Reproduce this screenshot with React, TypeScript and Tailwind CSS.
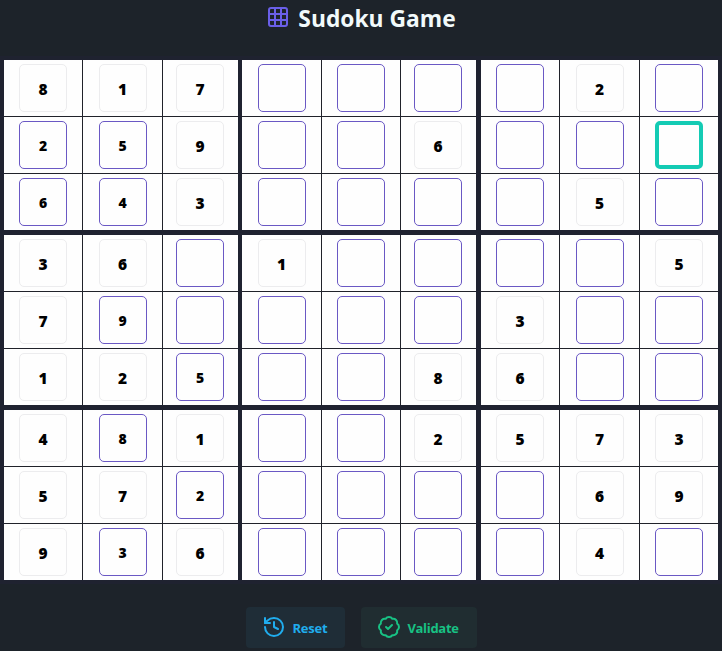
import React from "react";
import { BadgeCheck, Grid3x3, History } from "lucide-react";

type Kind = "given" | "entered" | "empty" | "focused";

// Digits are givens, digits after "+" are player entries, "." is empty, "*" is focused.
const puzzle: string[][] = [
  ["8", "1", "7", ".", ".", ".", ".", "2", "."],
  ["+2", "+5", "9", ".", ".", "6", ".", ".", "*"],
  ["+6", "+4", "3", ".", ".", ".", ".", "5", "."],
  ["3", "6", ".", "1", ".", ".", ".", ".", "5"],
  ["7", "+9", ".", ".", ".", ".", "3", ".", "."],
  ["1", "2", "+5", ".", ".", "8", "6", ".", "."],
  ["4", "+8", "1", ".", ".", "2", "5", "7", "3"],
  ["5", "7", "+2", ".", ".", ".", ".", "6", "9"],
  ["9", "+3", "6", ".", ".", ".", ".", "4", "."],
];

const boxStyles: Record<Kind, string> = {
  given: "border border-[#ececee] text-[15.5px] pt-[3px]",
  entered: "border border-[#6a58c4] text-[14px] pt-px",
  empty: "border border-[#6a58c4]",
  focused: "border-4 border-[#14cbb4]",
};

const bands = [0, 1, 2];
const bandColumns = [
  "grid-cols-[78px_79px_75px]",
  "grid-cols-[79px_78px_75px]",
  "grid-cols-[78px_79px_78px]",
];

function Cell({ code, narrow }: { code: string; narrow: boolean }) {
  const kind: Kind =
    code === "." ? "empty" : code === "*" ? "focused" : code[0] === "+" ? "entered" : "given";
  const digit = code.replace(/[^0-9]/g, "");
  return (
    <div className={`flex items-center justify-center bg-[#fefefe] ${narrow ? "pr-px" : ""}`}>
      <div
        className={`flex size-12 items-center justify-center rounded-[5px] font-extrabold text-black ${boxStyles[kind]}`}
      >
        {digit}
      </div>
    </div>
  );
}

function Block({ row, col }: { row: number; col: number }) {
  return (
    <div className={`grid grid-rows-[56px_56px_56px] gap-px bg-[#20222a] ${bandColumns[col]}`}>
      {bands.map((r) =>
        bands.map((c) => (
          <Cell key={`${r}${c}`} code={puzzle[row * 3 + r][col * 3 + c]} narrow={c === 2 && col < 2} />
        )),
      )}
    </div>
  );
}

export default function App() {
  return (
    <main className="h-[651px] w-[722px] overflow-hidden bg-[#1d232a] font-['Open_Sans','Noto_Sans',sans-serif]">
      <header className="flex h-14 items-start justify-center gap-2">
        <Grid3x3 className="mt-[5px] size-6 text-[#6a5fe8]" strokeWidth={2} />
        <h1 className="pt-[3px] text-[22.8px] leading-8 font-bold whitespace-nowrap text-[#f2fafb]">Sudoku Game</h1>
      </header>
      <section className="flex flex-col gap-[5px] bg-[#1f2230] p-1">
        {bands.map((row) => (
          <div key={row} className="grid grid-cols-[238px_239px_237px]">
            {bands.map((col) => (
              <div key={col} className="flex">
                <Block row={row} col={col} />
              </div>
            ))}
          </div>
        ))}
      </section>
      <footer className="flex justify-center gap-4 pt-[23px]">
        <button className="flex h-[41px] w-[99px] items-center justify-center gap-1.5 rounded bg-[#1f2d37] text-[13px] font-bold tracking-[-0.2px] text-[#20adee]">
          <History className="mb-0.5 size-6 shrink-0" strokeWidth={2} />
          <span className="pt-0.5">Reset</span>
        </button>
        <button className="flex h-[41px] w-[116px] items-center justify-center gap-1.5 rounded bg-[#202d31] pr-px text-[13px] font-bold tracking-[-0.3px] text-[#18c184]">
          <BadgeCheck className="mb-0.5 size-6 shrink-0" strokeWidth={2} />
          <span className="pt-0.5">Validate</span>
        </button>
      </footer>
    </main>
  );
}
